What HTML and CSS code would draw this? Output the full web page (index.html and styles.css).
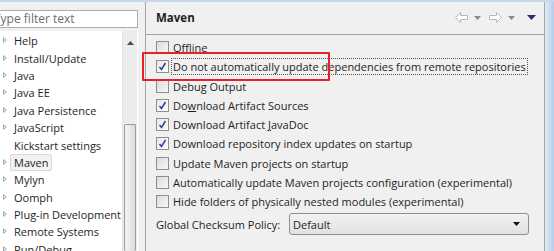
FILE: index.html
```html
<!DOCTYPE html>
<html lang="en">
<head>
  <meta charset="UTF-8">
  <title>Preferences - Maven</title>
  <link rel="stylesheet" href="styles.css">
</head>
<body>

<div class="frame">
  <div class="sidebar">
    <div class="filter">
      <div class="filter-box">Type filter text</div>
    </div>
    <div class="tree-wrap">
      <ul class="tree">
        <li><span class="exp"></span>Help</li>
        <li><span class="exp"></span>Install/Update</li>
        <li><span class="exp"></span>Java</li>
        <li><span class="exp"></span>Java EE</li>
        <li><span class="exp"></span>Java Persistence</li>
        <li><span class="exp"></span>JavaScript</li>
        <li><span class="noexp"></span>Kickstart settings</li>
        <li><span class="exp"></span><span class="sel">Maven</span></li>
        <li><span class="exp"></span>Mylyn</li>
        <li><span class="exp"></span>Oomph</li>
        <li><span class="exp"></span>Plug-in Development</li>
        <li><span class="exp"></span>Remote Systems</li>
        <li><span class="exp"></span>Run/Debug</li>
      </ul>
      <div class="scrollbar">
        <div class="sb-up">
          <svg width="7" height="4" viewBox="0 0 7 4"><path d="M0 4 L3.5 0 L7 4 Z" fill="#4a4a4a"/></svg>
        </div>
        <div class="sb-thumb"></div>
      </div>
    </div>
  </div>

  <div class="gap"></div>

  <div class="panel">
    <div class="panel-head">
      <span class="title">Maven</span>
      <div class="nav">
        <svg width="13" height="11" viewBox="0 0 13 11"><path d="M0.5 5.5 L5.5 0.5 L5.5 3.5 L12.5 3.5 L12.5 7.5 L5.5 7.5 L5.5 10.5 Z" fill="#fff" stroke="#b8b8b8"/></svg>
        <svg class="dd" width="7" height="4" viewBox="0 0 7 4"><path d="M0 0 H7 L3.5 4 Z" fill="#8a8a8a"/></svg>
        <svg width="13" height="11" viewBox="0 0 13 11"><path d="M12.5 5.5 L7.5 0.5 L7.5 3.5 L0.5 3.5 L0.5 7.5 L7.5 7.5 L7.5 10.5 Z" fill="#fff" stroke="#b8b8b8"/></svg>
        <svg class="dd" width="7" height="4" viewBox="0 0 7 4"><path d="M0 0 H7 L3.5 4 Z" fill="#8a8a8a"/></svg>
        <svg class="menu" width="9" height="5" viewBox="0 0 9 5"><path d="M0 0 H9 L4.5 5 Z" fill="#3a2466"/></svg>
      </div>
    </div>

    <div class="options">
      <label class="opt"><span class="cb"></span><span>Offline</span></label>
      <label class="opt focus"><span class="cb on"><svg width="9" height="9" viewBox="0 0 9 9"><path d="M1.5 5 L3.5 7.5 L7.5 1" fill="none" stroke="#2a3f9a" stroke-width="1.5"/></svg></span><span class="txt">Do not automatically update dependencies from remote repositories</span></label>
      <label class="opt"><span class="cb"></span><span>Debug Output</span></label>
      <label class="opt"><span class="cb on"><svg width="9" height="9" viewBox="0 0 9 9"><path d="M1.5 5 L3.5 7.5 L7.5 1" fill="none" stroke="#2a3f9a" stroke-width="1.5"/></svg></span><span>Do<u>w</u>nload Artifact Sources</span></label>
      <label class="opt"><span class="cb on"><svg width="9" height="9" viewBox="0 0 9 9"><path d="M1.5 5 L3.5 7.5 L7.5 1" fill="none" stroke="#2a3f9a" stroke-width="1.5"/></svg></span><span>Download Artifact <u>J</u>avaDoc</span></label>
      <label class="opt"><span class="cb on"><svg width="9" height="9" viewBox="0 0 9 9"><path d="M1.5 5 L3.5 7.5 L7.5 1" fill="none" stroke="#2a3f9a" stroke-width="1.5"/></svg></span><span>Download repository index updates on startup</span></label>
      <label class="opt"><span class="cb"></span><span>Update Maven projects on startup</span></label>
      <label class="opt"><span class="cb"></span><span>Automatically update Maven projects configuration (experimental)</span></label>
      <label class="opt"><span class="cb"></span><span>Hide folders of physically nested modules (experimental)</span></label>

      <div class="policy">
        <span class="policy-label">Global Checksum Policy:</span>
        <div class="combo">
          <span>Default</span>
          <svg width="7" height="4" viewBox="0 0 7 4"><path d="M0 0 H7 L3.5 4 Z" fill="#111"/></svg>
        </div>
      </div>
    </div>

    <div class="highlight"></div>
  </div>

  <div class="edge"></div>
</div>

</body>
</html>
```

FILE: styles.css
```css
* {
  box-sizing: border-box;
}

body {
  margin: 0;
  font-family: 'Open Sans', 'Noto Sans', sans-serif;
  font-size: 11px;
  color: #1e1e1e;
  background: #f0f0f0;
  width: 554px;
  height: 251px;
  overflow: hidden;
}

.frame {
  display: flex;
  height: 251px;
  border-top: 2px solid #c7d8ec;
}

/* left side */
.sidebar {
  width: 138px;
  display: flex;
  flex-direction: column;
  background: #f0f0f0;
}

.filter {
  padding-top: 8px;
  height: 29px;
  overflow: hidden;
}

.filter-box {
  margin-left: -10px;
  height: 18px;
  background: #fff;
  border: 1px solid #acacac;
  color: #6d6d6d;
  padding-left: 3px;
  line-height: 16px;
  font-size: 12px;
}

.tree-wrap {
  flex: 1;
  display: flex;
  background: #fff;
  overflow: hidden;
}

.tree {
  list-style: none;
  margin: 0;
  padding: 1px 0 0 0;
  flex: 1;
}

.tree li {
  height: 17.4px;
  display: flex;
  align-items: center;
  white-space: nowrap;
  font-size: 11px;
}

.exp, .noexp {
  width: 14px;
  height: 7px;
  flex: none;
  position: relative;
}

.exp::before {
  content: "";
  position: absolute;
  left: 3px;
  top: 0;
  border-left: 4px solid #a6a6a6;
  border-top: 3.5px solid transparent;
  border-bottom: 3.5px solid transparent;
}

.exp::after {
  content: "";
  position: absolute;
  left: 4px;
  top: 2px;
  border-left: 2px solid #fff;
  border-top: 1.5px solid transparent;
  border-bottom: 1.5px solid transparent;
}

.sel {
  background: #f2f2f2;
  border: 1px solid #d9d9d9;
  border-radius: 2px;
  padding: 0 3px;
  margin-left: -4px;
  line-height: 15px;
}

.scrollbar {
  width: 15px;
  margin-right: 1px;
  display: flex;
  flex-direction: column;
  background: #ececec;
  border-left: 1px solid #e4e4e4;
}

.sb-up {
  height: 18px;
  display: flex;
  align-items: center;
  justify-content: center;
  padding-top: 6px;
}

.sb-thumb {
  margin-top: 75px;
  flex: 1;
  margin-left: 1px;
  margin-right: 1px;
  border: 1px solid #9a9a9a;
  border-radius: 2px;
  background: linear-gradient(90deg, #f4f4f4, #dcdcdc);
  border-bottom: none;
}

.gap {
  width: 8px;
  background: #f0f0f0;
  border-right: 1px solid #a5a5a5;
}

/* right side */
.panel {
  width: 399px;
  position: relative;
  background: #f0f0f0;
  border-right: 1px solid #a5a5a5;
}

.panel-head {
  height: 33px;
  border-bottom: 1px solid #a0a0a0;
  display: flex;
  align-items: center;
  padding: 0 8px 1px 10px;
}

.title {
  font-weight: bold;
  font-size: 11.5px;
  flex: 1;
}

.nav {
  display: flex;
  align-items: center;
  gap: 4px;
  margin-right: 0;
}

.nav .dd {
  margin: 0 4px 0 2px;
}

.nav .menu {
  margin-left: 4px;
}

.options {
  padding: 3px 0 0 10px;
}

.opt {
  display: flex;
  align-items: center;
  height: 19.25px;
  white-space: nowrap;
}

.cb {
  width: 13px;
  height: 13px;
  border: 1px solid #8e8f8f;
  background: linear-gradient(135deg, #dcdcdc, #f7f7f7);
  margin-right: 1px;
  flex: none;
  display: flex;
  align-items: center;
  justify-content: center;
}

.cb.on {
  background: linear-gradient(135deg, #e8e8e8, #fdfdfd);
}

.opt span:last-child {
  padding: 0 1px;
  margin-left: 2px;
}

.opt u {
  text-decoration: underline;
}

.focus .txt {
  outline: 1px dotted #555;
  line-height: 15px;
}

.policy {
  display: flex;
  align-items: center;
  margin-top: 2px;
}

.policy-label {
  width: 133px;
}

.combo {
  width: 240px;
  height: 22px;
  border: 1px solid #8f8f8f;
  border-radius: 3px;
  background: linear-gradient(#f2f2f2, #e1e1e1);
  display: flex;
  align-items: center;
  justify-content: space-between;
  padding: 0 8px 0 3px;
}

.highlight {
  position: absolute;
  left: -4px;
  top: 50px;
  width: 188px;
  height: 29px;
  border: 2px solid #e8202a;
  border-radius: 1px;
}

.edge {
  flex: 1;
  background: linear-gradient(90deg, #dfe9f5, #b6cfea);
}
```
